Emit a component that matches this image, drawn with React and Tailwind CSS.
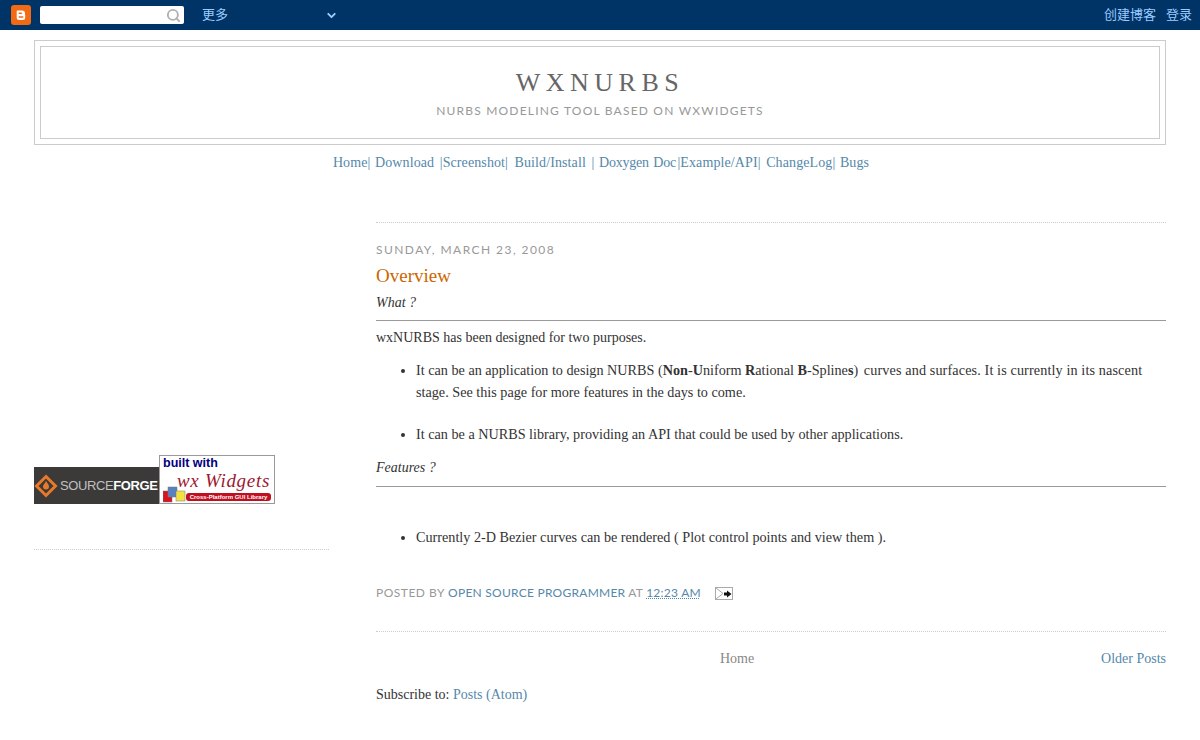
import React from 'react';
import { ChevronDown, Search } from 'lucide-react';

const serif = "font-['Liberation_Serif','DejaVu_Serif',serif]";
const meta = "font-['Lato','Open_Sans',sans-serif]";

const NavBar = () => (
  <div className="flex h-[30px] items-center bg-[#003366] font-['Liberation_Sans','Noto_Sans_CJK_SC',sans-serif] text-[13px] text-[#99ccff]">
    <div className="ml-[11px] flex h-[20px] w-[20px] items-center justify-center rounded-[3px] bg-[#f26a13]">
      <svg width="14" height="14" viewBox="0 0 14 14">
        <path d="M3 2.5h5a3 3 0 0 1 3 3v1h.2v3a2.5 2.5 0 0 1-2.5 2.5H5.2A2.5 2.5 0 0 1 2.7 9.5V3z" fill="#fff" />
        <rect x="4.6" y="4.6" width="3.4" height="1.5" rx=".7" fill="#f26a13" />
        <rect x="4.6" y="8.2" width="4.9" height="1.5" rx=".7" fill="#f26a13" />
      </svg>
    </div>
    <div className="ml-[9px] flex h-[18px] w-[144px] items-center justify-end rounded-[2px] bg-white pr-[3px]">
      <Search size={15} strokeWidth={3} className="text-[#b0b0b0]" />
    </div>
    <span className="ml-[18px]">更多</span>
    <ChevronDown size={13} strokeWidth={3.5} className="ml-[97px] text-[#99ccff]" />
    <div className="ml-auto mr-[8px] flex gap-[10px]">
      <span>创建博客</span>
      <span>登录</span>
    </div>
  </div>
);

const Header = () => (
  <div className="border border-[#cccccc] p-[5px]">
    <div className="flex h-[93px] flex-col items-center border border-[#cccccc]">
      <h1 className={`${serif} mt-[19px] text-[26px] font-normal leading-[34px] tracking-[5.5px] text-[#666666]`}>WXNURBS</h1>
      <p className={`${meta} mt-[3px] text-[12px] leading-[16px] tracking-[1.2px] text-[#999999]`}>NURBS MODELING TOOL BASED ON WXWIDGETS</p>
    </div>
  </div>
);

const Link = ({ children, className = '' }) => <a className={`text-[#5588aa] ${className}`}>{children}</a>;

const Sidebar = () => (
  <aside className="w-[295px] shrink-0">
    <div className="mt-[234px] flex items-end">
      <div className="flex h-[37px] w-[125px] items-center overflow-hidden bg-[#3b3a38]">
        <svg width="24" height="24" viewBox="0 0 24 24" className="shrink-0">
          <path d="M12 2.5 L21.5 12 L12 21.5 L2.5 12 Z" fill="none" stroke="#e8792a" strokeWidth="3" />
          <path d="M12 7 C13.5 9.5 15 10.5 15 12.5 A3 3 0 0 1 9 12.5 C9 10.5 11 9.5 12 7Z" fill="#e8792a" />
        </svg>
        <span className="ml-[2px] whitespace-nowrap font-['Liberation_Sans',sans-serif] text-[13px] tracking-[-0.4px] text-[#c0c0c0]">
          SOURCE<span className="font-bold text-white">FORGE</span>
        </span>
      </div>
      <div className="relative h-[49px] w-[116px] border border-[#999999] bg-white">
        <p className="ml-[3px] font-['Liberation_Sans',sans-serif] text-[12.5px] font-bold leading-[14px] text-[#000080]">built with</p>
        <p className="absolute left-[17px] top-[14px] whitespace-nowrap font-['Liberation_Serif',serif] text-[19px] italic leading-[22px] tracking-[0.7px] text-[#a01830]">wx Widgets</p>
        <svg width="26" height="22" viewBox="0 0 26 22" className="absolute left-[3px] top-[25px]">
          <rect x="0" y="10" width="9" height="11" fill="#d8121e" stroke="#777" strokeWidth=".5" />
          <rect x="5" y="6" width="9" height="10" fill="#5a82c0" stroke="#777" strokeWidth=".5" />
          <rect x="13" y="10" width="9" height="10" fill="#f4e040" stroke="#777" strokeWidth=".5" />
        </svg>
        <p className="absolute bottom-[2px] left-[26px] h-[8px] w-[85px] rounded-[3px] bg-[#c01020] text-center font-['Liberation_Sans',sans-serif] text-[6px] font-bold leading-[8px] text-white">Cross-Platform GUI Library</p>
      </div>
    </div>
    <div className="mt-[45px] border-b border-dotted border-[#cccccc]" />
  </aside>
);

const Rule = () => <hr className="border-0 border-t border-[#999999]" />;

const Post = () => (
  <main className={`${serif} ml-[47px] flex-1 text-[14px] leading-[22px] text-[#333333]`}>
    <div className="mt-[1px] border-t border-dotted border-[#cccccc]" />
    <h2 className={`${meta} mt-[19px] text-[12px] font-normal leading-[16px] tracking-[1.44px] text-[#999999]`}>SUNDAY, MARCH 23, 2008</h2>
    <h3 className="mt-[5px] text-[19px] font-normal leading-[25px] text-[#cc6600]">Overview</h3>
    <p className="mt-[5px] italic leading-[20px]">What ?</p>
    <div className="mt-[7px]"><Rule /></div>
    <p className="mt-[6px]">wxNURBS has been designed for two purposes.</p>
    <ul className="ml-[40px] mt-[10px] list-disc text-[14.2px]">
      <li>
        It can be an application to design NURBS (<b>Non</b>-<b>U</b>niform <b>R</b>ational <b>B</b>-Spline<b>s</b>)<span className="ml-[2px] tracking-[0.12px]"> curves and surfaces. It is currently in its nascent</span> stage. See this page for more features in the days to come.
      </li>
      <li className="mt-[20px]">It can be a NURBS library, providing an API that could be used by other applications.</li>
    </ul>
    <p className="mt-[12px] italic">Features ?</p>
    <div className="mt-[7px]"><Rule /></div>
    <ul className="ml-[40px] mt-[39px] list-disc text-[14.2px]">
      <li>Currently 2-D Bezier curves can be rendered ( Plot control points and view them ).</li>
    </ul>
    <div className={`${meta} mt-[37px] flex items-center text-[12px] leading-[16px] tracking-[0.25px] text-[#999999]`}>
      <span className="tracking-[0.5px]">POSTED BY&nbsp;</span>
      <Link>OPEN SOURCE PROGRAMMER</Link>
      <span>&nbsp;AT&nbsp;</span>
      <Link className="underline decoration-dotted">12:23 AM</Link>
      <svg width="18" height="13" viewBox="0 0 18 13" className="ml-[14px]">
        <rect x=".5" y=".5" width="17" height="12" fill="#fff" stroke="#aaa" />
        <path d="M1 1l7 5.5L1 12" fill="none" stroke="#aaa" />
        <path d="M9 5.5h3V3.5L16.5 7 12 10.5V8.5H9z" fill="#111" />
      </svg>
    </div>
    <div className="mt-[30px] border-t border-dotted border-[#cccccc]" />
    <div className="relative mt-[16px] flex justify-end">
      <span className="absolute left-[344px] text-[#888888]">Home</span>
      <Link>Older Posts</Link>
    </div>
    <p className="mt-[14px] text-[#333333]">Subscribe to: <Link>Posts (Atom)</Link></p>
  </main>
);

export default function App() {
  return (
    <div className="h-[740px] overflow-hidden bg-white">
      <NavBar />
      <div className="px-[34px] pt-[10px]">
        <Header />
        <nav className={`${serif} mt-[7px] whitespace-pre pl-[2px] text-center text-[14px] leading-[22px] tracking-[0.1px] text-[#5588aa] [word-spacing:1px]`}>
          Home| Download <span className="ml-[1px]">|Screenshot|</span><span className="ml-[2px]"> Build/Install </span><span className="ml-[1px]">| </span><span className="tracking-[-0.2px]">Doxygen Doc</span><span className="ml-[1.5px]">|Example/API|</span><span className="ml-[1px]"> ChangeLog| Bugs</span>
        </nav>
        <div className="mt-[47px] flex">
          <Sidebar />
          <Post />
        </div>
      </div>
    </div>
  );
}
